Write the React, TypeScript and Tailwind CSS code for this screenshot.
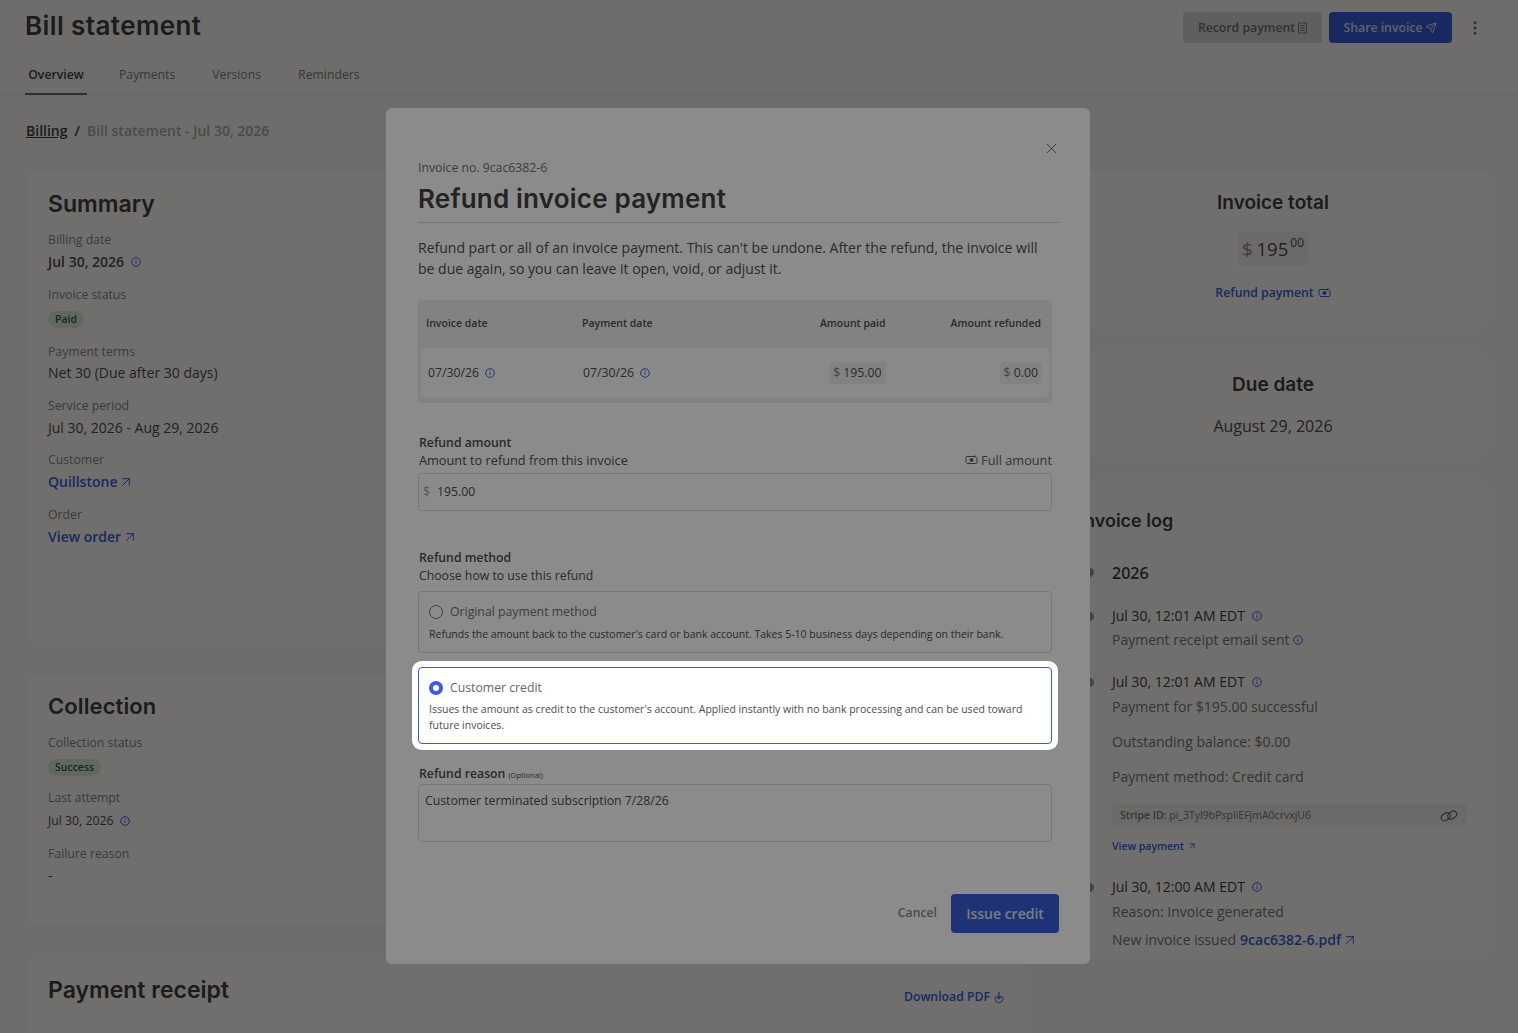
import { ArrowUpRight, EllipsisVertical, Send, X } from 'lucide-react'
import type { ReactNode } from 'react'

const OPEN = "font-['Open_Sans',sans-serif]"
const HEAD = "font-['Inter',sans-serif]"

function InfoDot({ className = '' }: { className?: string }) {
  return (
    <svg width="10" height="10" viewBox="0 0 10 10" fill="none" className={`inline-block shrink-0 text-[#3a5cd6] ${className}`}>
      <circle cx="5" cy="5" r="4.3" stroke="currentColor" strokeWidth="1" />
      <path d="M5 4.4v2.6M5 2.6v.9" stroke="currentColor" strokeWidth="1" />
    </svg>
  )
}

function MoneyIcon({ className = '' }: { className?: string }) {
  return (
    <svg width="13" height="10" viewBox="0 0 13 10" fill="none" className={`inline-block shrink-0 ${className}`}>
      <path d="M1 7.5V2.2q0-.7.7-.7h8.8M12 2.5v5.3q0 .7-.7.7H2.5" stroke="currentColor" strokeWidth="1" />
      <path d="M9.5.2l1.3 1.3-1.3 1.3M3.5 7.2L2.2 8.5l1.3 1.3" stroke="currentColor" strokeWidth="0.8" />
      <circle cx="6.5" cy="5" r="2" fill="currentColor" />
    </svg>
  )
}

function ReceiptIcon() {
  return (
    <svg width="9" height="12" viewBox="0 0 9 12" fill="none" className="shrink-0">
      <path d="M.6.6l1.3.7 1.3-.7 1.3.7 1.3-.7 1.3.7 1.3-.7v10.8l-1.3-.7-1.3.7-1.3-.7-1.3.7-1.3-.7-1.3.7z" stroke="currentColor" strokeWidth="0.9" />
      <path d="M2.3 3.6h4.4M2.3 6h4.4M2.3 8.4h4.4" stroke="currentColor" strokeWidth="0.9" />
    </svg>
  )
}

function DownloadIcon() {
  return (
    <svg width="12" height="12" viewBox="0 0 12 12" fill="none" className="inline-block shrink-0">
      <path d="M6 1v6.5M3.6 5.2L6 7.6l2.4-2.4" stroke="currentColor" strokeWidth="1.1" />
      <path d="M2.8 5.6a3.9 3.9 0 1 0 6.4 0" stroke="currentColor" strokeWidth="1" />
    </svg>
  )
}

function ChainIcon() {
  return (
    <svg width="18" height="14" viewBox="0 0 18 14" fill="none" className="shrink-0 text-[#5c5c5c]">
      <rect x="1" y="4.6" width="9.6" height="6.4" rx="3.2" transform="rotate(-35 5.8 7.8)" stroke="currentColor" strokeWidth="1.1" />
      <rect x="7.4" y="3" width="9.6" height="6.4" rx="3.2" transform="rotate(-35 12.2 6.2)" stroke="currentColor" strokeWidth="1.1" />
    </svg>
  )
}

function Field({ label, className = 'mb-[13px]', children }: { label: string; className?: string; children: ReactNode }) {
  return (
    <div className={className}>
      <div className="text-[12.25px] leading-[18px] text-[#858585]">{label}</div>
      {children}
    </div>
  )
}

function Value({ children }: { children: ReactNode }) {
  return <div className="mt-[3px] flex items-center text-[14px] leading-[20px] text-[#4d4d4d]">{children}</div>
}

function ExtLink({ children }: { children: ReactNode }) {
  return (
    <div className="mt-[3px] flex items-center gap-[1px] text-[14px] leading-[20px] font-semibold text-[#3a5cd6]">
      {children}
      <ArrowUpRight size={16} strokeWidth={1.5} />
    </div>
  )
}

function Badge({ children }: { children: ReactNode }) {
  return (
    <span className="mt-[7px] inline-block rounded-full bg-[#d7ecd6] px-[7px] text-[10.5px] leading-[17px] font-semibold text-[#4d4d4d]">
      {children}
    </span>
  )
}

function LogEntry({ time, children }: { time: string; children: ReactNode }) {
  return (
    <div className="relative">
      <span className="absolute top-[6px] left-[-27px] h-[9px] w-[9px] rounded-full bg-[#9a9a9a]" />
      <div className="flex items-center gap-[7px] text-[14px] leading-[20px] text-[#404040]">
        {time}
        <InfoDot />
      </div>
      {children}
    </div>
  )
}

function Page() {
  return (
    <div className="flex h-full flex-col bg-[#f7f5f1]">
      <header className="h-[95px] shrink-0 border-b border-[#ecebe7] px-[25px] shadow-[0_1px_3px_rgba(0,0,0,0.06)]">
        <div className="flex h-[56px] items-start justify-between pt-[12px]">
          <h1 className={`${HEAD} text-[26px] leading-[28px] font-semibold tracking-[0.4px] text-[#404040]`}>Bill statement</h1>
          <div className="mr-[9px] flex items-center">
            <button className="flex h-[31px] w-[139px] items-center justify-center gap-[3px] rounded-[4px] bg-[#d5d5d5] pt-[1px] text-[12.25px] font-semibold text-[#707070]">
              Record payment <ReceiptIcon />
            </button>
            <button className="ml-[7px] flex h-[31px] w-[123px] items-center justify-center gap-[3px] rounded-[4px] bg-[#3a5cd6] pt-[1px] text-[12.25px] font-semibold text-[#d9dcf0]">
              Share invoice <Send size={12} />
            </button>
            <EllipsisVertical size={18} className="ml-[14px] text-[#707070]" />
          </div>
        </div>
        <nav className="mt-[10px] flex text-[12.25px] leading-[18px] text-[#7c7c7c]">
          <div className="w-[62px] border-b-2 border-[#6b6b6b] pb-[9px] text-center font-semibold text-[#404040]">Overview</div>
          <div className="ml-[32px]">Payments</div>
          <div className="ml-[37px]">Versions</div>
          <div className="ml-[37px]">Reminders</div>
        </nav>
      </header>

      <div className="px-[26px] pt-[26px] text-[14px] leading-[20px] font-semibold text-[#a8a8a8]">
        <span className="text-[#404040] underline">Billing</span>
        <span className="mx-[7px] text-[#404040]">/</span>
        Bill statement - Jul 30, 2026
      </div>

      <div className="mt-[29px] flex items-start gap-[30px] pr-[28px] pl-[27px]">
        <div className="flex w-[999px] shrink-0 flex-col gap-[31px]">
          <section className="h-[473px] rounded-[6px] border border-[#f3f1ed] bg-[#fcf9f7] px-[20px] pt-[20px]">
            <h2 className={`${HEAD} mb-[14px] text-[23px] leading-[26px] font-semibold text-[#404040]`}>Summary</h2>
            <Field label="Billing date" className="mb-[14px]">
              <Value>
                <span className="font-semibold">Jul 30, 2026</span>
                <InfoDot className="ml-[7px]" />
              </Value>
            </Field>
            <Field label="Invoice status" className="mb-[14px]"><Badge>Paid</Badge></Field>
            <Field label="Payment terms" className="mb-[14px]">
              <div className="mt-[2px] text-[14px] leading-[20px] text-[#4d4d4d]">Net 30 (Due after 30 days)</div>
            </Field>
            <Field label="Service period"><Value>Jul 30, 2026 - Aug 29, 2026</Value></Field>
            <Field label="Customer" className="mb-[14px]"><ExtLink>Quillstone</ExtLink></Field>
            <Field label="Order"><ExtLink>View order</ExtLink></Field>
          </section>
          <section className="h-[253px] rounded-[6px] border border-[#f3f1ed] bg-[#fcf9f7] px-[20px] pt-[18px]">
            <h2 className={`${HEAD} mb-[15px] text-[22px] leading-[26px] font-semibold tracking-[0.1px] text-[#404040]`}>Collection</h2>
            <Field label="Collection status" className="mb-[12px]"><Badge>Success</Badge></Field>
            <Field label="Last attempt" className="mb-[15px]">
              <div className="mt-[5px] flex items-center text-[12.25px] leading-[18px] text-[#4d4d4d]">
                Jul 30, 2026
                <InfoDot className="ml-[7px]" />
              </div>
            </Field>
            <Field label="Failure reason"><Value>-</Value></Field>
          </section>
          <section className="flex h-[120px] items-start justify-between rounded-[6px] border border-[#f3f1ed] bg-[#fcf9f7] pt-[18px] pr-[20px] pl-[20px]">
            <h2 className={`${HEAD} text-[23px] leading-[26px] font-semibold text-[#404040]`}>Payment receipt</h2>
            <div className="mt-[11px] flex items-center gap-[3px] text-[12.25px] font-semibold text-[#3a5cd6]">
              Download PDF <DownloadIcon />
            </div>
          </section>
        </div>

        <div className="flex flex-1 flex-col gap-[20px]">
          <section className="flex h-[160px] flex-col items-center rounded-[6px] border border-[#f3f1ed] bg-[#fcf9f7] pt-[20px]">
            <h3 className={`${HEAD} text-[19px] leading-[24px] font-semibold text-[#404040]`}>Invoice total</h3>
            <div className="mt-[17px] flex h-[34px] items-center rounded-[4px] bg-[#f0eeea] px-[4px] text-[18.5px] text-[#4d4d4d]">
              <span className="mr-[4px] text-[#8a8a8a]">$</span>195<sup className="ml-[2px] text-[12px]">00</sup>
            </div>
            <div className="mt-[18px] flex items-center gap-[4px] text-[12.25px] font-semibold text-[#3a5cd6]">
              Refund payment <MoneyIcon />
            </div>
          </section>
          <section className="flex h-[108px] flex-col items-center rounded-[6px] border border-[#f3f1ed] bg-[#fcf9f7] pt-[22px]">
            <h3 className={`${HEAD} text-[19px] leading-[24px] font-semibold text-[#404040]`}>Due date</h3>
            <div className="mt-[18px] text-[16px] leading-[22px] text-[#4d4d4d]">August 29, 2026</div>
          </section>
          <section className="h-[483px] rounded-[6px] border border-[#f3f1ed] bg-[#fcf9f7] pt-[30px] pl-[22px]">
            <h3 className={`${HEAD} text-[18px] leading-[24px] font-semibold text-[#404040]`}>Invoice log</h3>
            <div className="mt-[28px] ml-[33px] w-[355px]">
              <div className="relative text-[16px] leading-[24px] font-semibold text-[#404040]">
                <span className="absolute top-[7px] left-[-27px] h-[9px] w-[9px] rounded-full bg-[#9a9a9a]" />
                2026
              </div>
              <div className="mt-[21px]">
                <LogEntry time="Jul 30, 12:01 AM EDT">
                  <div className="mt-[4px] flex items-center gap-[3px] text-[14px] leading-[20px] text-[#747474]">
                    Payment receipt email sent <InfoDot />
                  </div>
                </LogEntry>
              </div>
              <div className="mt-[22px]">
                <LogEntry time="Jul 30, 12:01 AM EDT">
                  <div className="mt-[5px] text-[14px] leading-[20px] text-[#747474]">Payment for $195.00 successful</div>
                  <div className="mt-[15px] text-[14px] leading-[20px] text-[#747474]">Outstanding balance: $0.00</div>
                  <div className="mt-[15px] text-[14px] leading-[20px] text-[#747474]">Payment method: Credit card</div>
                  <div className="mt-[17px] flex h-[23px] items-center justify-between rounded-[4px] bg-[#f0eeea] pr-[9px] pl-[8px] text-[10.5px] text-[#747474]">
                    <span><b className="font-semibold">Stripe ID:</b> pi_3TyI9bPspliEFjmA0crvxjU6</span>
                    <ChainIcon />
                  </div>
                  <div className="mt-[12px] flex items-center gap-[3px] text-[10.5px] leading-[14px] font-semibold text-[#3a5cd6]">
                    View payment <ArrowUpRight size={10} />
                  </div>
                </LogEntry>
              </div>
              <div className="mt-[24px]">
                <LogEntry time="Jul 30, 12:00 AM EDT">
                  <div className="mt-[5px] text-[14px] leading-[20px] text-[#747474]">Reason: Invoice generated</div>
                  <div className="mt-[8px] flex items-center text-[14px] leading-[20px] text-[#747474]">
                    New invoice issued
                    <span className="ml-[4px] flex items-center gap-[1px] font-semibold text-[#3a5cd6]">
                      9cac6382-6.pdf <ArrowUpRight size={16} strokeWidth={1.5} />
                    </span>
                  </div>
                </LogEntry>
              </div>
            </div>
          </section>
        </div>
      </div>
    </div>
  )
}

function Modal() {
  return (
    <div className="absolute top-[108px] left-[386px] h-[856px] w-[704px] rounded-[6px] bg-white pr-[31px] pl-[32px] text-[#4d4d4d]">
      <X size={17} strokeWidth={1.2} className="absolute top-[32px] right-[30px] text-[#555]" />
      <div className="pt-[51px] text-[12.25px] leading-[18px] font-medium text-[#707070]">Invoice no. 9cac6382-6</div>
      <h2 className={`${HEAD} mt-[7px] text-[26px] leading-[30px] font-semibold tracking-[0.2px] text-[#404040]`}>Refund invoice payment</h2>
      <div className="mt-[8px] h-px bg-[#d4d4d4]" />
      <p className="mt-[14px] w-[630px] text-[14px] leading-[21px]">
        Refund part or all of an invoice payment. This can't be undone. After the refund, the invoice will be due again, so you can leave it open, void, or adjust it.
      </p>

      <div className="mt-[21px] h-[103px] w-[634px] rounded-[4px] bg-[#eeeeee] px-[3px] pt-[3px]">
        <div className="flex h-[45px] items-center pr-[8px] pb-[4px] pl-[5px] text-[10.5px] font-semibold">
          <div className="w-[156px]">Invoice date</div>
          <div>Payment date</div>
          <div className="ml-auto">Amount paid</div>
          <div className="ml-[65px]">Amount refunded</div>
        </div>
        <div className="flex h-[50px] items-center rounded-[4px] bg-[#fcfcfc] pr-[7px] pl-[7px] text-[12.25px]">
          <div className="flex w-[155px] items-center gap-[6px]">07/30/26 <InfoDot /></div>
          <div className="flex items-center gap-[6px]">07/30/26 <InfoDot /></div>
          <div className="ml-auto rounded-[3px] bg-[#eeeeee] px-[4px] leading-[22px]"><span className="text-[#808080]">$</span> 195.00</div>
          <div className="ml-[114px] rounded-[3px] bg-[#eeeeee] px-[4px] leading-[22px]"><span className="text-[#808080]">$</span> 0.00</div>
        </div>
      </div>

      <div className="mt-[31px] w-[634px]">
        <div className="pl-[1px] text-[12.25px] leading-[17px] font-semibold">Refund amount</div>
        <div className="flex justify-between pl-[1px] text-[12.75px] leading-[18px] font-medium">
          Amount to refund from this invoice
          <span className="flex items-center gap-[3px] font-normal text-[#606060]"><MoneyIcon /> Full amount</span>
        </div>
        <div className="mt-[4px] flex h-[38px] items-center rounded-[4px] border border-[#d9d9d9] pl-[4px] text-[12.25px]">
          <span className="mr-[7px] text-[#a0a0a0]">$</span>195.00
        </div>
      </div>

      <div className="mt-[38px] w-[634px]">
        <div className="pl-[1px] text-[12.25px] leading-[18px] font-semibold">Refund method</div>
        <div className="pl-[1px] text-[12.25px] leading-[18px]">Choose how to use this refund</div>
        <div className="mt-[6px] h-[62px] rounded-[4px] border border-[#d9d9d9] px-[10px] pt-[11px]">
          <div className="flex items-center gap-[7px] text-[12.25px] leading-[18px] text-[#707070]">
            <span className="h-[14px] w-[14px] rounded-full border border-[#707070]" />
            Original payment method
          </div>
          <div className="mt-[5px] text-[10.5px] leading-[16px]">Refunds the amount back to the customer's card or bank account. Takes 5-10 business days depending on their bank.</div>
        </div>
        <div className="relative z-10 mt-[14px] h-[77px] rounded-[4px] border border-[#3a5cd6] bg-white px-[10px] pt-[11px] shadow-[0_0_0_6px_#fff,0_0_0_9999px_rgba(0,0,0,0.455)]">
          <div className="flex items-center gap-[7px] text-[12.25px] leading-[18px] text-[#666]">
            <span className="h-[14px] w-[14px] rounded-full border-[4px] border-[#3a5cd6] bg-white" />
            Customer credit
          </div>
          <div className="mt-[4px] w-[600px] text-[10.5px] leading-[16px]">Issues the amount as credit to the customer's account. Applied instantly with no bank processing and can be used toward future invoices.</div>
        </div>
        <div className="mt-[21px] flex items-baseline gap-[3px] pl-[1px] text-[12.25px] leading-[18px] font-semibold">
          Refund reason <span className="text-[7.5px] font-normal">(Optional)</span>
        </div>
        <div className="h-[58px] rounded-[4px] border border-[#d9d9d9] px-[6px] pt-[7px] text-[12.25px] leading-[18px]">
          Customer terminated subscription 7/28/26
        </div>
      </div>

      <div className="mt-[52px] flex items-center justify-end">
        <span className="mr-[14px] text-[12.25px] font-semibold text-[#8a8a8a]">Cancel</span>
        <button className="h-[39px] w-[108px] rounded-[4px] bg-[#3a5cd6] text-[14px] font-semibold text-[#dfe3f5]">Issue credit</button>
      </div>
    </div>
  )
}

export default function App() {
  return (
    <div className={`${OPEN} relative h-[1033px] overflow-hidden`}>
      <Page />
      <div className="absolute inset-0 bg-black/[0.18]" />
      <Modal />
    </div>
  )
}
